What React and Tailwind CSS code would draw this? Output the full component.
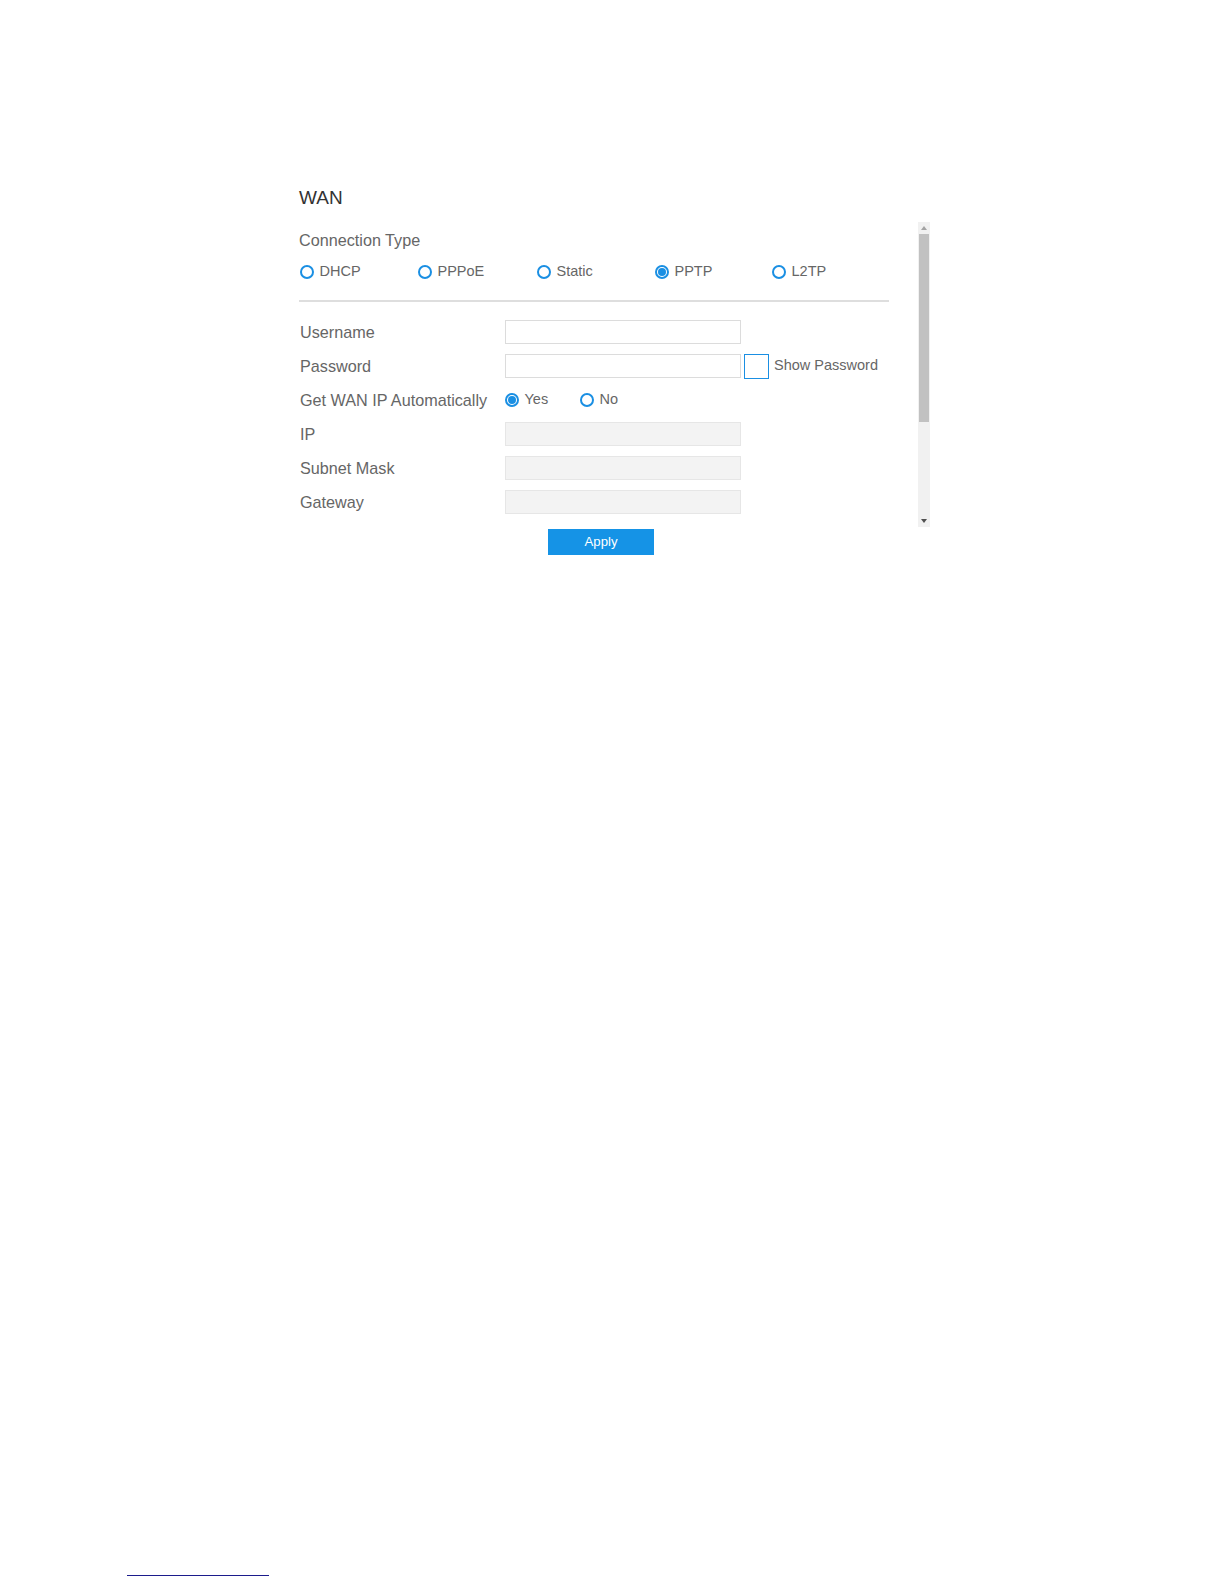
function Radio({ label, checked, width }) {
  return (
    <label className={`flex items-center ${width} h-4`}>
      <span className="flex items-center justify-center w-[13.5px] h-[13.5px] rounded-full border-2 border-[#1a8fe3] bg-white">
        {checked && <span className="w-[7.5px] h-[7.5px] rounded-full bg-[#1a8fe3]" />}
      </span>
      <span className="ml-[6px] text-[14.5px] text-[#666]">{label}</span>
    </label>
  );
}

function Row({ label, children }) {
  return (
    <div className="flex items-center h-6">
      <div className="w-[206px] pl-px text-[16.2px] text-[#666]">{label}</div>
      {children}
    </div>
  );
}

function TextBox({ disabled }) {
  return (
    <div
      className={`w-[236px] h-[24.5px] border ${
        disabled ? 'bg-[#f3f3f3] border-[#e6e6e6]' : 'bg-white border-[#dcdcdc]'
      }`}
    />
  );
}

export default function App() {
  return (
    <div className="h-[1584px] flex flex-col bg-white font-['Liberation_Sans',Arial,sans-serif]">
      <div className="ml-[299px] pt-[186px] w-[631px]">
        <h1 className="h-6 leading-6 text-[19px] text-[#333]">WAN</h1>

        <div className="mt-[12px] flex h-[305px]">
          {/* scroll area */}
          <div className="w-[619px] overflow-hidden">
            <div className="pt-[8px] h-5 leading-5 text-[16.2px] text-[#666]">Connection Type</div>
            <div className="mt-[22px] flex pl-px">
              <Radio label="DHCP" width="w-[118px]" />
              <Radio label="PPPoE" width="w-[119px]" />
              <Radio label="Static" width="w-[118px]" />
              <Radio label="PPTP" width="w-[117px]" checked />
              <Radio label="L2TP" width="w-[117px]" />
            </div>
            <div className="mt-[20px] w-[590px] h-[2px] bg-[#dedede]" />

            <div className="mt-[18px] flex flex-col gap-[10px]">
              <Row label="Username">
                <TextBox />
              </Row>
              <Row label="Password">
                <TextBox />
                <span className="ml-[3px] w-[25px] h-[25px] border-[1.5px] border-[#1a8fe3] bg-white" />
                <span className="ml-[5px] text-[14.5px] text-[#666]">Show Password</span>
              </Row>
              <Row label="Get WAN IP Automatically">
                <Radio label="Yes" width="w-[75px]" checked />
                <Radio label="No" width="w-[75px]" />
              </Row>
              <Row label="IP">
                <TextBox disabled />
              </Row>
              <Row label="Subnet Mask">
                <TextBox disabled />
              </Row>
              <Row label="Gateway">
                <TextBox disabled />
              </Row>
            </div>
          </div>

          {/* scrollbar */}
          <div className="w-3 bg-[#f1f1f1] flex flex-col">
            <div className="h-3 flex items-center justify-center">
              <svg width="6" height="4" viewBox="0 0 6 4">
                <path d="M0 4 L3 0 L6 4 Z" fill="#a3a3a3" />
              </svg>
            </div>
            <div className="h-[188px] mx-px bg-[#c1c1c1]" />
            <div className="flex-1" />
            <div className="h-3 flex items-center justify-center">
              <svg width="6" height="4" viewBox="0 0 6 4">
                <path d="M0 0 L6 0 L3 4 Z" fill="#505050" />
              </svg>
            </div>
          </div>
        </div>

        <button className="mt-[2px] ml-[249px] w-[106px] h-[26px] bg-[#1593e6] text-white text-[13.2px]">
          Apply
        </button>
      </div>

      <div className="mt-auto mb-[8px] ml-[127px] w-[142px] h-[1.5px] bg-[#1c1c8c]" />
    </div>
  );
}
